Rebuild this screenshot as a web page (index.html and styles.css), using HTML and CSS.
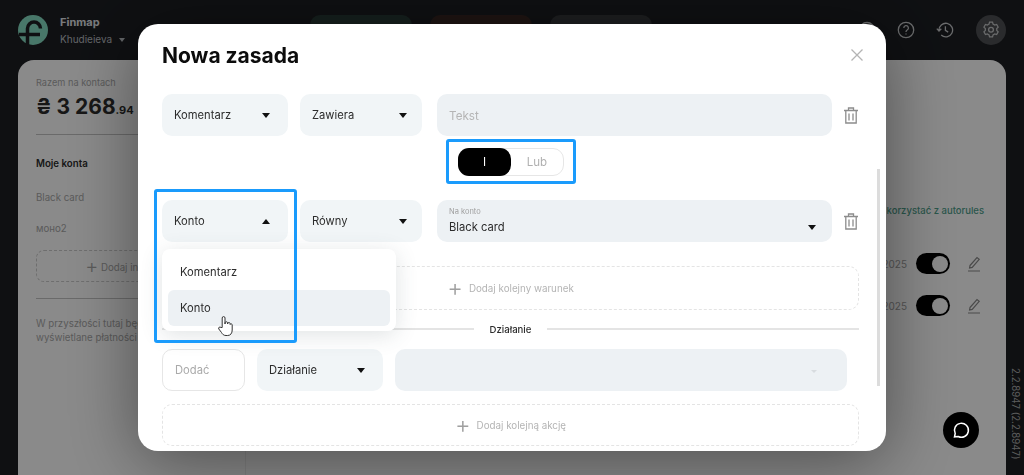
FILE: index.html
```html
<!DOCTYPE html>
<html lang="pl">
<head>
  <meta charset="UTF-8">
  <title>Finmap - Nowa zasada</title>
  <link rel="stylesheet" href="styles.css">
</head>
<body>

  <!-- App behind the dialog -->
  <header class="topbar">
    <div class="brand">
      <svg class="logo" viewBox="0 0 30 30">
        <circle cx="15" cy="15" r="15" fill="#86dcc2"/>
        <path d="M9.500 30V13.500a6.500 6.500 0 0 1 13 0" fill="none" stroke="#1c1e22" stroke-width="3.500"/>
        <path d="M1 19.500h21" stroke="#1c1e22" stroke-width="3.500"/>
      </svg>
      <div>
        <div class="brand-name">Finmap</div>
        <div class="brand-user">Khudieieva <span class="brand-caret"></span></div>
      </div>
    </div>
    <div class="pills">
      <div class="pill pill-green"></div>
      <div class="pill pill-red"></div>
      <div class="pill pill-gray"></div>
    </div>
    <div class="top-icons">
      <svg class="top-icon" viewBox="0 0 18 18"><circle cx="9" cy="9" r="7.5"/></svg>
      <svg class="top-icon" viewBox="0 0 18 18">
        <circle cx="9" cy="9" r="7.7"/>
        <path d="M6.800 7a2.300 2.300 0 1 1 3.400 2c-.9.500-1.200 1-1.200 1.900M9 12.600v1"/>
      </svg>
      <svg class="top-icon" viewBox="0 0 18 18">
        <path d="M3 9.500a6.800 6.800 0 1 1 2.200 4.600M.8 7.600 3 10l2.300-2.200M9.400 5.200v4.200l2.800 1.700"/>
      </svg>
      <div class="gear-btn">
        <svg class="top-icon" viewBox="0 0 18 18">
          <path d="M7.400 2h3.200l.5 2.100 1.800 1 2-.6 1.600 2.800-1.500 1.500v2l1.500 1.500-1.600 2.800-2-.6-1.800 1-.5 2.100H7.400l-.5-2.100-1.800-1-2 .6-1.600-2.800L3 10.800v-2L1.500 7.300l1.600-2.800 2 .6 1.800-1z" transform="translate(.5 -.8) scale(.95)"/>
          <circle cx="9" cy="8.800" r="2.400"/>
        </svg>
      </div>
    </div>
  </header>

  <div class="workspace">
    <aside class="sidebar">
      <div class="total-label">Razem na kontach</div>
      <div class="total-value">₴ 3 268<small>.94</small></div>
      <div class="side-line"></div>
      <div class="side-title">Moje konta</div>
      <div class="side-account">Black card</div>
      <div class="side-account side-mono">моно2</div>
      <div class="side-add"><span class="side-plus">+</span> Dodaj inne konto</div>
      <div class="side-line side-line-low"></div>
      <p class="side-note">W przyszłości tutaj będą<br>wyświetlane płatności</p>
    </aside>
    <main class="rules">
      <a class="rules-link">Jak korzystać z autorules</a>
      <div class="rule-row">
        <span>12.01.2025</span><span class="toggle"></span>
        <svg class="pencil" viewBox="0 0 14 16"><path d="M3 9.500 10 1.500l2.200 1.900-7 8-2.600.6zM1 15h12"/></svg>
      </div>
      <div class="rule-row">
        <span>12.01.2025</span><span class="toggle"></span>
        <svg class="pencil" viewBox="0 0 14 16"><path d="M3 9.500 10 1.500l2.200 1.900-7 8-2.600.6zM1 15h12"/></svg>
      </div>
    </main>
    <div class="version">2.2.8947 (2.2.8947)</div>
  </div>

  <!-- Dialog -->
  <div class="overlay">
    <div class="modal">
      <div class="modal-head">
        <h1>Nowa zasada</h1>
        <svg class="close" viewBox="0 0 12 12"><path d="M.5.500l11 11M11.500.500l-11 11"/></svg>
      </div>

      <div class="row">
        <div class="select w-126"><span>Komentarz</span><i class="caret"></i></div>
        <div class="select w-122"><span>Zawiera</span><i class="caret"></i></div>
        <div class="field field-text">Tekst</div>
        <svg class="trash" viewBox="0 0 14 17">
          <path d="M0 3.500h14M4.500 3V1h5v2M1.800 3.500V16h10.400V3.500M5 6.500v7M9 6.500v7"/>
        </svg>
      </div>

      <div class="switch">
        <div class="switch-on">I</div>
        <div class="switch-off">Lub</div>
      </div>

      <div class="row">
        <div class="select w-126"><span>Konto</span><i class="caret caret-up"></i></div>
        <div class="select w-122"><span>Równy</span><i class="caret"></i></div>
        <div class="field field-value">
          <div>
            <div class="field-label">Na konto</div>
            <div>Black card</div>
          </div>
          <i class="caret caret-low"></i>
        </div>
        <svg class="trash" viewBox="0 0 14 17">
          <path d="M0 3.500h14M4.500 3V1h5v2M1.800 3.500V16h10.400V3.500M5 6.500v7M9 6.500v7"/>
        </svg>
      </div>

      <div class="add-box add-condition"><span class="plus">+</span> Dodaj kolejny warunek</div>

      <div class="divider"><span>Działanie</span></div>

      <div class="row row-action">
        <div class="input-empty">Dodać</div>
        <div class="select w-126"><span>Działanie</span><i class="caret"></i></div>
        <div class="field field-action"><i class="caret caret-faint"></i></div>
      </div>

      <div class="add-box add-action"><span class="plus">+</span> Dodaj kolejną akcję</div>

      <div class="menu">
        <div class="menu-item">Komentarz</div>
        <div class="menu-item menu-item-active">Konto</div>
      </div>

      <svg class="hand" viewBox="0 0 16 22">
        <path d="M5.200 12.500V3a1.400 1.400 0 0 1 2.800 0v6l.1-1.300a1.300 1.300 0 0 1 2.500 0V9l.2-.7a1.200 1.200 0 0 1 2.300.2v1l.2-.3a1.100 1.100 0 0 1 1.900.6V15c0 3-1.500 5.500-4.500 5.500H9c-2.500 0-3.500-1.300-4.500-3L1.800 14c-.8-1.400 1-2.800 2.200-1.500z"/>
      </svg>

      <div class="scrollbar"></div>
      <div class="mark mark-column"></div>
      <div class="mark mark-switch"></div>
    </div>
  </div>

  <div class="chat">
    <svg viewBox="0 0 20 20"><path d="M3.500 16.800l.7-3.300a7 7 0 1 1 3 3z"/></svg>
  </div>

</body>
</html>
```

FILE: styles.css
```css
* {
  margin: 0;
  padding: 0;
  box-sizing: border-box;
}

body {
  width: 1024px;
  height: 475px;
  overflow: hidden;
  background-color: #1c1e22;
  font-family: Inter, "Liberation Sans", sans-serif;
  color: #2c2c2c;
}

/* Top bar */
.topbar {
  display: flex;
  align-items: center;
  height: 60px;
  padding: 0 18px;
}

.brand {
  display: flex;
  align-items: center;
  gap: 12px;
  width: 292px;
}

.logo {
  width: 30px;
  height: 30px;
}

.brand-name {
  font-size: 11px;
  font-weight: 700;
  color: #e0e4e8;
  line-height: 16px;
}

.brand-user {
  font-size: 10px;
  color: #b8bcc0;
  line-height: 16px;
  margin-top: 1px;
}

.brand-caret {
  display: inline-block;
  margin: 0 0 1px 4px;
  border-left: 3.500px solid transparent;
  border-right: 3.500px solid transparent;
  border-top: 4px solid #b8bcc0;
}

.pills {
  display: flex;
  gap: 18px;
}

.pill {
  width: 102px;
  height: 30px;
  border-radius: 10px;
}

.pill-green { background-color: #283b37; }
.pill-red { background-color: #382622; }
.pill-gray { background-color: #36383b; }

.top-icons {
  display: flex;
  align-items: center;
  gap: 21px;
  margin-left: auto;
}

.top-icon {
  width: 18px;
  height: 18px;
  fill: none;
  stroke: #c4c6c8;
  stroke-width: 1.300;
}

.gear-btn {
  display: flex;
  align-items: center;
  justify-content: center;
  width: 30px;
  height: 30px;
  margin-left: 1px;
  border-radius: 50%;
  background-color: #4e5053;
}

/* Panels behind the dialog */
.workspace {
  display: flex;
  height: 415px;
  margin-left: 18px;
}

.sidebar {
  width: 228px;
  padding: 16px 18px;
  background-color: #fff;
  border-radius: 16px 0 0 0;
  border-right: 1px solid #eee;
  font-size: 9.700px;
  color: #a8a8a8;
}

.total-label {
  font-size: 9.200px;
  line-height: 13px;
}

.total-value {
  margin-top: 5px;
  font-size: 21px;
  font-weight: 700;
  line-height: 26px;
  color: #2c2c2c;
}

.total-value small {
  font-size: 11px;
  line-height: 0;
}

.side-line {
  margin-top: 14px;
  height: 1px;
  background-color: #c4c4c4;
}

.side-title {
  margin-top: 22px;
  font-weight: 600;
  line-height: 14px;
  color: #2c2c2c;
}

.side-account {
  margin-top: 20px;
  line-height: 14px;
}

.side-mono {
  margin-top: 17px;
}

.side-add {
  margin-top: 14px;
  height: 32px;
  line-height: 30px;
  text-align: center;
  border: 1px dashed #ccc;
  border-radius: 8px;
  white-space: nowrap;
  overflow: hidden;
}

.side-plus {
  font-size: 20px;
  font-weight: 300;
  vertical-align: -2px;
}

.side-line-low {
  margin-top: 16px;
}

.side-note {
  margin-top: 18px;
  line-height: 14px;
  white-space: nowrap;
}

.rules {
  flex: 1;
  display: flex;
  flex-direction: column;
  align-items: flex-end;
  padding: 143px 25px 0 0;
  background-color: #fff;
  border-radius: 0 16px 0 0;
  font-size: 10px;
}

.rules-link {
  margin-right: -3px;
  font-size: 9.500px;
  line-height: 15px;
  font-weight: 500;
  color: #4fa08c;
}

.rule-row {
  display: flex;
  align-items: center;
  gap: 9px;
  height: 21px;
  margin-bottom: 21px;
  color: #a0a0a0;
}

.rules-link + .rule-row {
  margin-top: 35px;
}

.toggle {
  position: relative;
  width: 34px;
  height: 21px;
  margin-right: 8px;
  border-radius: 11px;
  background-color: #000;
}

.toggle::after {
  content: "";
  position: absolute;
  top: 2.500px;
  right: 2px;
  width: 16px;
  height: 16px;
  border-radius: 50%;
  background-color: #fff;
}

.pencil {
  width: 14px;
  height: 16px;
  fill: none;
  stroke: #8a8a8a;
  stroke-width: 1.200;
}

.version {
  width: 18px;
  padding-top: 308px;
  writing-mode: vertical-rl;
  font-size: 9.700px;
  line-height: 18px;
  color: #aaa;
  white-space: nowrap;
}

/* Dialog */
.overlay {
  position: fixed;
  top: 0;
  left: 0;
  width: 100%;
  height: 100%;
  display: flex;
  justify-content: center;
  padding-top: 24px;
  background: rgba(0, 0, 0, 0.46);
}

.modal {
  position: relative;
  width: 748px;
  height: 427px;
  padding: 0 27px 0 24px;
  overflow: hidden;
  background-color: #fff;
  border-radius: 20px;
  box-shadow: 0 10px 70px rgba(0, 0, 0, 0.45);
}

.modal-head {
  display: flex;
  align-items: center;
  justify-content: space-between;
  height: 70px;
  margin-right: -4px;
  padding-bottom: 8px;
}

.modal-head h1 {
  font-size: 21px;
  font-weight: 700;
  color: #0c0c0c;
}

.close {
  width: 12px;
  height: 12px;
  fill: none;
  stroke: #b4b4b4;
  stroke-width: 1.300;
}

.row {
  display: flex;
  align-items: center;
  height: 42px;
  font-size: 11.200px;
}

.select {
  display: flex;
  align-items: center;
  justify-content: space-between;
  height: 42px;
  padding: 0 18px 0 12px;
  background-color: #f1f5f7;
  border-radius: 10px;
}

.w-126 { width: 126px; }

.w-122 {
  width: 122px;
  margin-left: 12px;
  padding-right: 15px;
}

.caret {
  width: 0;
  height: 0;
  border-left: 4.500px solid transparent;
  border-right: 4.500px solid transparent;
  border-top: 5px solid #111;
}

.caret-up {
  border-top: none;
  border-bottom: 5px solid #111;
}

.caret-low {
  margin-top: 14px;
  margin-right: 4px;
}

.caret-faint {
  border-left-width: 3px;
  border-right-width: 3px;
  border-top: 3px solid #d8dcdf;
  margin: 3px 18px 0 auto;
}

.field {
  display: flex;
  align-items: center;
  height: 42px;
  padding: 0 12px;
  background-color: #edf1f4;
  border-radius: 10px;
}

.field-text,
.field-value {
  width: 395px;
  margin-left: 15px;
}

.field-text {
  padding-top: 2px;
  font-size: 11.700px;
  color: #b5b5b5;
}

.field-value {
  justify-content: space-between;
  padding-bottom: 1px;
}

.field-label {
  font-size: 7.500px;
  line-height: 10px;
  margin-bottom: 3px;
  color: #a0a0a0;
}

.trash {
  width: 14px;
  height: 17px;
  margin-left: 12px;
  fill: none;
  stroke: #8c8c8c;
  stroke-width: 1.300;
}

.switch {
  display: flex;
  width: 106px;
  height: 28px;
  margin: 12px 0 24px 296px;
  border: 1px solid #e6e6e6;
  border-radius: 11px;
  font-size: 11.500px;
}

.switch-on {
  display: flex;
  align-items: center;
  justify-content: center;
  width: 53px;
  height: 28px;
  margin: -1px 0 0 -1px;
  color: #fff;
  background-color: #000;
  border-radius: 11px;
}

.switch-off {
  flex: 1;
  display: flex;
  align-items: center;
  justify-content: center;
  color: #b0b0b0;
}

.add-box {
  display: flex;
  align-items: center;
  justify-content: center;
  gap: 6px;
  width: 697px;
  height: 44px;
  border: 1px dashed #e4e4e4;
  border-radius: 10px;
  font-size: 9.800px;
  color: #b4b4b4;
}

.plus {
  font-size: 24px;
  font-weight: 300;
  line-height: 20px;
  color: #a0a0a0;
}

.add-condition {
  margin-top: 24px;
}

.divider {
  display: flex;
  align-items: center;
  justify-content: center;
  gap: 16px;
  width: 697px;
  height: 20px;
  margin: 9px 0 10px;
  font-size: 9.600px;
  font-weight: 500;
}

.divider::before,
.divider::after {
  content: "";
  flex: 1;
  height: 1.500px;
  background-color: #e4e4e4;
}

.row-action {
  gap: 12px;
}

.input-empty {
  display: flex;
  align-items: center;
  width: 83px;
  height: 42px;
  padding-left: 12px;
  color: #aaa;
  border: 1px solid #e6e6e6;
  border-radius: 10px;
}

.field-action {
  width: 452px;
}

.add-action {
  margin-top: 13px;
  height: 42px;
}

.menu {
  position: absolute;
  top: 225px;
  left: 24px;
  width: 234px;
  padding: 5px 6px;
  background-color: #fff;
  border-radius: 8px;
  box-shadow: 0 4px 22px rgba(60, 80, 90, 0.16);
  font-size: 11.200px;
}

.menu-item {
  display: flex;
  align-items: center;
  height: 36px;
  padding-left: 12px;
  border-radius: 6px;
}

.menu-item-active {
  background-color: #edf1f4;
}

.hand {
  position: absolute;
  top: 291px;
  left: 79px;
  width: 16px;
  height: 22px;
  fill: #fff;
  stroke: #333;
  stroke-width: 1;
}

.scrollbar {
  position: absolute;
  top: 145px;
  left: 739px;
  width: 3px;
  height: 217px;
  background-color: #dcdcdc;
}

/* Blue highlight frames */
.mark {
  position: absolute;
  border: 3px solid #1a9bfc;
  border-radius: 3px;
}

.mark-column {
  top: 165px;
  left: 16px;
  width: 143px;
  height: 154px;
}

.mark-switch {
  top: 115px;
  left: 308px;
  width: 130px;
  height: 45px;
}

.chat {
  position: fixed;
  top: 412px;
  left: 943px;
  display: flex;
  align-items: center;
  justify-content: center;
  width: 36px;
  height: 36px;
  border-radius: 50%;
  background-color: #000;
}

.chat svg {
  width: 20px;
  height: 20px;
  fill: none;
  stroke: #fff;
  stroke-width: 1.500;
}
```
